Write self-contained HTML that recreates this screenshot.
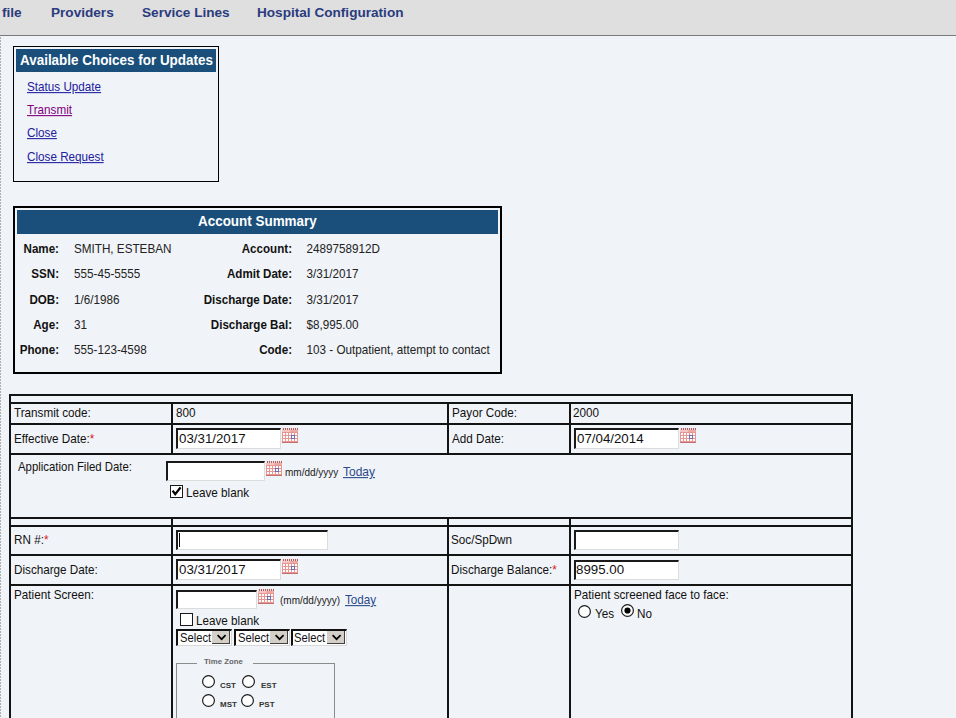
<!DOCTYPE html>
<html><head><meta charset="utf-8"><title>Account</title>
<style>
html,body{margin:0;padding:0;}
body{width:956px;height:718px;overflow:hidden;background:#f0f3f7;position:relative;font-family:'Liberation Sans', sans-serif;}
.a{position:absolute;}
.t{position:absolute;line-height:20px;white-space:pre;font-family:'Liberation Sans', sans-serif;}
.inp{background:#fff;border-style:solid;border-width:2px 1px 1px 2px;border-color:#1a1a1a #dcdcdc #dcdcdc #1a1a1a;box-sizing:border-box;}
.sel{width:56px;height:17px;background:#fff;border-style:solid;border-width:2px 1px 1px 2px;border-color:#111 #d8d8d8 #d8d8d8 #111;box-sizing:border-box;}
.sel .btn{position:absolute;right:1px;top:0;width:18px;height:13px;background:#d4d0c8;border-right:1px solid #404040;border-bottom:1px solid #404040;box-sizing:border-box;}
.sel .btn svg{position:absolute;left:0;top:0;}
</style></head><body>
<div class="a" style="left:0px;top:0px;width:956px;height:35px;background:#dfdfdf;"></div>
<div class="a" style="left:0px;top:35px;width:956px;height:1px;background:#7a7a7a;"></div>
<div class="a" style="left:0;top:37px;width:1px;height:681px;background:repeating-linear-gradient(to bottom,#aeb1ae 0,#aeb1ae 2px,transparent 2px,transparent 3px)"></div>
<div class="a" style="left:13px;top:46px;width:206px;height:136px;border:1px solid #000;box-sizing:border-box;"></div>
<div class="a" style="left:16px;top:49px;width:200px;height:23px;background:#1a4f7b;"></div>
<div class="a" style="left:13px;top:206px;width:489px;height:168px;border:2px solid #000;box-sizing:border-box;"></div>
<div class="a" style="left:17px;top:210px;width:481px;height:24px;background:#1a4f7b;"></div>
<div class="a" style="left:9px;top:394px;width:844px;height:2px;background:#141414;"></div>
<div class="a" style="left:9px;top:402px;width:844px;height:2px;background:#141414;"></div>
<div class="a" style="left:9px;top:423px;width:844px;height:2px;background:#141414;"></div>
<div class="a" style="left:9px;top:453px;width:844px;height:2px;background:#141414;"></div>
<div class="a" style="left:9px;top:517px;width:844px;height:2px;background:#141414;"></div>
<div class="a" style="left:9px;top:525px;width:844px;height:2px;background:#141414;"></div>
<div class="a" style="left:9px;top:554px;width:844px;height:2px;background:#141414;"></div>
<div class="a" style="left:9px;top:584px;width:844px;height:2px;background:#141414;"></div>
<div class="a" style="left:9px;top:394px;width:2px;height:325px;background:#141414;"></div>
<div class="a" style="left:851px;top:394px;width:2px;height:325px;background:#141414;"></div>
<div class="a" style="left:171px;top:402px;width:2px;height:52px;background:#141414;"></div>
<div class="a" style="left:447px;top:402px;width:2px;height:52px;background:#141414;"></div>
<div class="a" style="left:569px;top:402px;width:2px;height:52px;background:#141414;"></div>
<div class="a" style="left:171px;top:517px;width:2px;height:202px;background:#141414;"></div>
<div class="a" style="left:447px;top:517px;width:2px;height:202px;background:#141414;"></div>
<div class="a" style="left:569px;top:517px;width:2px;height:202px;background:#141414;"></div>
<div class="a inp" style="left:176px;top:428px;width:105px;height:21px"></div>
<svg class="a" style="left:282px;top:428px" width="16" height="15" viewBox="0 0 16 15" shape-rendering="crispEdges"><rect x="0" y="2" width="16" height="12" fill="#e99592"/><rect x="0" y="2" width="8" height="2" fill="#f5c4c0"/><rect x="8" y="2" width="8" height="2" fill="#eda8a4"/><rect x="0" y="0" width="16" height="2" fill="#f4dada"/><g fill="#a86464"><rect x="1" y="0" width="1" height="2"/><rect x="3" y="0" width="1" height="2"/><rect x="5" y="0" width="1" height="2"/><rect x="7" y="0" width="1" height="2"/><rect x="9" y="0" width="1" height="2"/><rect x="11" y="0" width="1" height="2"/><rect x="13" y="0" width="1" height="2"/><rect x="15" y="0" width="1" height="2"/></g><g fill="#fff"><rect x="1" y="5" width="2" height="2"/><rect x="4" y="5" width="2" height="2"/><rect x="7" y="5" width="2" height="2"/><rect x="10" y="5" width="2" height="2"/><rect x="13" y="5" width="2" height="2"/><rect x="1" y="8" width="2" height="2"/><rect x="4" y="8" width="2" height="2"/><rect x="7" y="8" width="2" height="2"/><rect x="10" y="8" width="2" height="2"/><rect x="13" y="8" width="2" height="2"/><rect x="1" y="11" width="2" height="2"/><rect x="4" y="11" width="2" height="2"/><rect x="7" y="11" width="2" height="2"/><rect x="10" y="11" width="2" height="2"/><rect x="13" y="11" width="2" height="2"/></g><rect x="9" y="7" width="4" height="4" fill="#6870b4"/><rect x="10" y="8" width="2" height="2" fill="#fff"/><rect x="0" y="14" width="16" height="1" fill="#c47070"/></svg>
<div class="a inp" style="left:574px;top:428px;width:105px;height:21px"></div>
<svg class="a" style="left:680px;top:428px" width="16" height="15" viewBox="0 0 16 15" shape-rendering="crispEdges"><rect x="0" y="2" width="16" height="12" fill="#e99592"/><rect x="0" y="2" width="8" height="2" fill="#f5c4c0"/><rect x="8" y="2" width="8" height="2" fill="#eda8a4"/><rect x="0" y="0" width="16" height="2" fill="#f4dada"/><g fill="#a86464"><rect x="1" y="0" width="1" height="2"/><rect x="3" y="0" width="1" height="2"/><rect x="5" y="0" width="1" height="2"/><rect x="7" y="0" width="1" height="2"/><rect x="9" y="0" width="1" height="2"/><rect x="11" y="0" width="1" height="2"/><rect x="13" y="0" width="1" height="2"/><rect x="15" y="0" width="1" height="2"/></g><g fill="#fff"><rect x="1" y="5" width="2" height="2"/><rect x="4" y="5" width="2" height="2"/><rect x="7" y="5" width="2" height="2"/><rect x="10" y="5" width="2" height="2"/><rect x="13" y="5" width="2" height="2"/><rect x="1" y="8" width="2" height="2"/><rect x="4" y="8" width="2" height="2"/><rect x="7" y="8" width="2" height="2"/><rect x="10" y="8" width="2" height="2"/><rect x="13" y="8" width="2" height="2"/><rect x="1" y="11" width="2" height="2"/><rect x="4" y="11" width="2" height="2"/><rect x="7" y="11" width="2" height="2"/><rect x="10" y="11" width="2" height="2"/><rect x="13" y="11" width="2" height="2"/></g><rect x="9" y="7" width="4" height="4" fill="#6870b4"/><rect x="10" y="8" width="2" height="2" fill="#fff"/><rect x="0" y="14" width="16" height="1" fill="#c47070"/></svg>
<div class="a inp" style="left:166px;top:461px;width:99px;height:20px"></div>
<svg class="a" style="left:266px;top:461px" width="16" height="15" viewBox="0 0 16 15" shape-rendering="crispEdges"><rect x="0" y="2" width="16" height="12" fill="#e99592"/><rect x="0" y="2" width="8" height="2" fill="#f5c4c0"/><rect x="8" y="2" width="8" height="2" fill="#eda8a4"/><rect x="0" y="0" width="16" height="2" fill="#f4dada"/><g fill="#a86464"><rect x="1" y="0" width="1" height="2"/><rect x="3" y="0" width="1" height="2"/><rect x="5" y="0" width="1" height="2"/><rect x="7" y="0" width="1" height="2"/><rect x="9" y="0" width="1" height="2"/><rect x="11" y="0" width="1" height="2"/><rect x="13" y="0" width="1" height="2"/><rect x="15" y="0" width="1" height="2"/></g><g fill="#fff"><rect x="1" y="5" width="2" height="2"/><rect x="4" y="5" width="2" height="2"/><rect x="7" y="5" width="2" height="2"/><rect x="10" y="5" width="2" height="2"/><rect x="13" y="5" width="2" height="2"/><rect x="1" y="8" width="2" height="2"/><rect x="4" y="8" width="2" height="2"/><rect x="7" y="8" width="2" height="2"/><rect x="10" y="8" width="2" height="2"/><rect x="13" y="8" width="2" height="2"/><rect x="1" y="11" width="2" height="2"/><rect x="4" y="11" width="2" height="2"/><rect x="7" y="11" width="2" height="2"/><rect x="10" y="11" width="2" height="2"/><rect x="13" y="11" width="2" height="2"/></g><rect x="9" y="7" width="4" height="4" fill="#6870b4"/><rect x="10" y="8" width="2" height="2" fill="#fff"/><rect x="0" y="14" width="16" height="1" fill="#c47070"/></svg>
<svg class="a" style="left:170px;top:485px" width="13" height="13" viewBox="0 0 13 13"><rect x="0.5" y="0.5" width="12" height="12" fill="#fff" stroke="#1a1a1a"/><path d="M2.6 5.6 L5.2 9.2 L10.6 2.4" fill="none" stroke="#000" stroke-width="2.3"/></svg>
<div class="a inp" style="left:176px;top:530px;width:152px;height:20px"></div>
<div class="a" style="left:179px;top:533px;width:1px;height:14px;background:#000;"></div>
<div class="a inp" style="left:574px;top:530px;width:105px;height:20px"></div>
<div class="a inp" style="left:176px;top:559px;width:105px;height:21px"></div>
<svg class="a" style="left:282px;top:559px" width="16" height="15" viewBox="0 0 16 15" shape-rendering="crispEdges"><rect x="0" y="2" width="16" height="12" fill="#e99592"/><rect x="0" y="2" width="8" height="2" fill="#f5c4c0"/><rect x="8" y="2" width="8" height="2" fill="#eda8a4"/><rect x="0" y="0" width="16" height="2" fill="#f4dada"/><g fill="#a86464"><rect x="1" y="0" width="1" height="2"/><rect x="3" y="0" width="1" height="2"/><rect x="5" y="0" width="1" height="2"/><rect x="7" y="0" width="1" height="2"/><rect x="9" y="0" width="1" height="2"/><rect x="11" y="0" width="1" height="2"/><rect x="13" y="0" width="1" height="2"/><rect x="15" y="0" width="1" height="2"/></g><g fill="#fff"><rect x="1" y="5" width="2" height="2"/><rect x="4" y="5" width="2" height="2"/><rect x="7" y="5" width="2" height="2"/><rect x="10" y="5" width="2" height="2"/><rect x="13" y="5" width="2" height="2"/><rect x="1" y="8" width="2" height="2"/><rect x="4" y="8" width="2" height="2"/><rect x="7" y="8" width="2" height="2"/><rect x="10" y="8" width="2" height="2"/><rect x="13" y="8" width="2" height="2"/><rect x="1" y="11" width="2" height="2"/><rect x="4" y="11" width="2" height="2"/><rect x="7" y="11" width="2" height="2"/><rect x="10" y="11" width="2" height="2"/><rect x="13" y="11" width="2" height="2"/></g><rect x="9" y="7" width="4" height="4" fill="#6870b4"/><rect x="10" y="8" width="2" height="2" fill="#fff"/><rect x="0" y="14" width="16" height="1" fill="#c47070"/></svg>
<div class="a inp" style="left:574px;top:560px;width:105px;height:20px"></div>
<div class="a inp" style="left:176px;top:590px;width:81px;height:19px"></div>
<svg class="a" style="left:258px;top:589px" width="16" height="15" viewBox="0 0 16 15" shape-rendering="crispEdges"><rect x="0" y="2" width="16" height="12" fill="#e99592"/><rect x="0" y="2" width="8" height="2" fill="#f5c4c0"/><rect x="8" y="2" width="8" height="2" fill="#eda8a4"/><rect x="0" y="0" width="16" height="2" fill="#f4dada"/><g fill="#a86464"><rect x="1" y="0" width="1" height="2"/><rect x="3" y="0" width="1" height="2"/><rect x="5" y="0" width="1" height="2"/><rect x="7" y="0" width="1" height="2"/><rect x="9" y="0" width="1" height="2"/><rect x="11" y="0" width="1" height="2"/><rect x="13" y="0" width="1" height="2"/><rect x="15" y="0" width="1" height="2"/></g><g fill="#fff"><rect x="1" y="5" width="2" height="2"/><rect x="4" y="5" width="2" height="2"/><rect x="7" y="5" width="2" height="2"/><rect x="10" y="5" width="2" height="2"/><rect x="13" y="5" width="2" height="2"/><rect x="1" y="8" width="2" height="2"/><rect x="4" y="8" width="2" height="2"/><rect x="7" y="8" width="2" height="2"/><rect x="10" y="8" width="2" height="2"/><rect x="13" y="8" width="2" height="2"/><rect x="1" y="11" width="2" height="2"/><rect x="4" y="11" width="2" height="2"/><rect x="7" y="11" width="2" height="2"/><rect x="10" y="11" width="2" height="2"/><rect x="13" y="11" width="2" height="2"/></g><rect x="9" y="7" width="4" height="4" fill="#6870b4"/><rect x="10" y="8" width="2" height="2" fill="#fff"/><rect x="0" y="14" width="16" height="1" fill="#c47070"/></svg>
<svg class="a" style="left:180px;top:613px" width="13" height="13" viewBox="0 0 13 13"><rect x="0.5" y="0.5" width="12" height="12" fill="#fff" stroke="#1a1a1a"/></svg>
<div class="a sel" style="left:176px;top:629px"><div class="btn"><svg width="17" height="13" viewBox="0 0 17 13"><path d="M5.6 4.2 L9.6 8.2 L13.6 4.2" fill="none" stroke="#000" stroke-width="1.7"/></svg></div></div>
<div class="a sel" style="left:234px;top:629px"><div class="btn"><svg width="17" height="13" viewBox="0 0 17 13"><path d="M5.6 4.2 L9.6 8.2 L13.6 4.2" fill="none" stroke="#000" stroke-width="1.7"/></svg></div></div>
<div class="a sel" style="left:291px;top:629px"><div class="btn"><svg width="17" height="13" viewBox="0 0 17 13"><path d="M5.6 4.2 L9.6 8.2 L13.6 4.2" fill="none" stroke="#000" stroke-width="1.7"/></svg></div></div>
<div class="a" style="left:176px;top:663px;width:159px;height:80px;border:1px solid #8c8c8c;box-sizing:border-box"></div>
<div class="a" style="left:197px;top:660px;width:56px;height:6px;background:#f0f3f7;"></div>
<svg class="a" style="left:202px;top:675px" width="13" height="13" viewBox="0 0 13 13"><circle cx="6.5" cy="6.5" r="5.9" fill="#fff" stroke="#1c1c1c" stroke-width="1.2"/></svg>
<svg class="a" style="left:242px;top:675px" width="13" height="13" viewBox="0 0 13 13"><circle cx="6.5" cy="6.5" r="5.9" fill="#fff" stroke="#1c1c1c" stroke-width="1.2"/></svg>
<svg class="a" style="left:202px;top:694px" width="13" height="13" viewBox="0 0 13 13"><circle cx="6.5" cy="6.5" r="5.9" fill="#fff" stroke="#1c1c1c" stroke-width="1.2"/></svg>
<svg class="a" style="left:241px;top:694px" width="13" height="13" viewBox="0 0 13 13"><circle cx="6.5" cy="6.5" r="5.9" fill="#fff" stroke="#1c1c1c" stroke-width="1.2"/></svg>
<svg class="a" style="left:578px;top:605px" width="13" height="13" viewBox="0 0 13 13"><circle cx="6.5" cy="6.5" r="5.9" fill="#fff" stroke="#1c1c1c" stroke-width="1.2"/></svg>
<svg class="a" style="left:621px;top:604px" width="13" height="13" viewBox="0 0 13 13"><circle cx="6.5" cy="6.5" r="5.9" fill="#fff" stroke="#1c1c1c" stroke-width="1.2"/><circle cx="6.5" cy="6.5" r="3.1" fill="#000"/></svg>
<div class="t" style="top:3px;font-weight:700;font-size:13.6px;color:#2a3b7e;left:2px;">file</div>
<div class="t" style="top:3px;font-weight:700;font-size:13.6px;color:#2a3b7e;left:51px;">Providers</div>
<div class="t" style="top:3px;font-weight:700;font-size:13.6px;color:#2a3b7e;left:142px;">Service Lines</div>
<div class="t" style="top:3px;font-weight:700;font-size:13.6px;color:#2a3b7e;left:257px;">Hospital Configuration</div>
<div class="t" style="top:51px;font-weight:700;font-size:13.45px;color:#fff;left:20px;transform:scaleY(1.08);transform-origin:0 14px;">Available Choices for Updates</div>
<div class="t" style="top:77px;font-weight:400;font-size:11.7px;color:#2020a0;left:27px;text-decoration:underline;transform:scaleY(1.08);transform-origin:0 14px;">Status Update</div>
<div class="t" style="top:100px;font-weight:400;font-size:11.7px;color:#800080;left:27px;text-decoration:underline;transform:scaleY(1.08);transform-origin:0 14px;">Transmit</div>
<div class="t" style="top:123px;font-weight:400;font-size:11.7px;color:#2020a0;left:27px;text-decoration:underline;transform:scaleY(1.08);transform-origin:0 14px;">Close</div>
<div class="t" style="top:147px;font-weight:400;font-size:11.7px;color:#2020a0;left:27px;text-decoration:underline;transform:scaleY(1.08);transform-origin:0 14px;">Close Request</div>
<div class="t" style="top:212px;font-weight:700;font-size:13.45px;color:#fff;left:198px;transform:scaleY(1.08);transform-origin:0 14px;">Account Summary</div>
<div class="t" style="top:239px;font-weight:700;font-size:11.6px;color:#111;right:897px;transform:scaleY(1.08);transform-origin:0 14px;">Name:</div>
<div class="t" style="top:239px;font-weight:400;font-size:11.7px;color:#222;left:74px;transform:scaleY(1.08);transform-origin:0 14px;">SMITH, ESTEBAN</div>
<div class="t" style="top:239px;font-weight:700;font-size:11.6px;color:#111;right:664px;transform:scaleY(1.08);transform-origin:0 14px;">Account:</div>
<div class="t" style="top:239px;font-weight:400;font-size:11.7px;color:#222;left:306.5px;transform:scaleY(1.08);transform-origin:0 14px;">2489758912D</div>
<div class="t" style="top:264px;font-weight:700;font-size:11.6px;color:#111;right:897px;transform:scaleY(1.08);transform-origin:0 14px;">SSN:</div>
<div class="t" style="top:264px;font-weight:400;font-size:11.7px;color:#222;left:74px;transform:scaleY(1.08);transform-origin:0 14px;">555-45-5555</div>
<div class="t" style="top:264px;font-weight:700;font-size:11.6px;color:#111;right:664px;transform:scaleY(1.08);transform-origin:0 14px;">Admit Date:</div>
<div class="t" style="top:264px;font-weight:400;font-size:11.7px;color:#222;left:306.5px;transform:scaleY(1.08);transform-origin:0 14px;">3/31/2017</div>
<div class="t" style="top:290px;font-weight:700;font-size:11.6px;color:#111;right:897px;transform:scaleY(1.08);transform-origin:0 14px;">DOB:</div>
<div class="t" style="top:290px;font-weight:400;font-size:11.7px;color:#222;left:74px;transform:scaleY(1.08);transform-origin:0 14px;">1/6/1986</div>
<div class="t" style="top:290px;font-weight:700;font-size:11.6px;color:#111;right:664px;transform:scaleY(1.08);transform-origin:0 14px;">Discharge Date:</div>
<div class="t" style="top:290px;font-weight:400;font-size:11.7px;color:#222;left:306.5px;transform:scaleY(1.08);transform-origin:0 14px;">3/31/2017</div>
<div class="t" style="top:315px;font-weight:700;font-size:11.6px;color:#111;right:897px;transform:scaleY(1.08);transform-origin:0 14px;">Age:</div>
<div class="t" style="top:315px;font-weight:400;font-size:11.7px;color:#222;left:74px;transform:scaleY(1.08);transform-origin:0 14px;">31</div>
<div class="t" style="top:315px;font-weight:700;font-size:11.6px;color:#111;right:664px;transform:scaleY(1.08);transform-origin:0 14px;">Discharge Bal:</div>
<div class="t" style="top:315px;font-weight:400;font-size:11.7px;color:#222;left:306.5px;transform:scaleY(1.08);transform-origin:0 14px;">$8,995.00</div>
<div class="t" style="top:340px;font-weight:700;font-size:11.6px;color:#111;right:897px;transform:scaleY(1.08);transform-origin:0 14px;">Phone:</div>
<div class="t" style="top:340px;font-weight:400;font-size:11.7px;color:#222;left:74px;transform:scaleY(1.08);transform-origin:0 14px;">555-123-4598</div>
<div class="t" style="top:340px;font-weight:700;font-size:11.6px;color:#111;right:664px;transform:scaleY(1.08);transform-origin:0 14px;">Code:</div>
<div class="t" style="top:340px;font-weight:400;font-size:11.7px;color:#222;left:306.5px;transform:scaleY(1.08);transform-origin:0 14px;">103 - Outpatient, attempt to contact</div>
<div class="t" style="top:403px;font-weight:400;font-size:11.7px;color:#111;left:14px;transform:scaleY(1.08);transform-origin:0 14px;">Transmit code:</div>
<div class="t" style="top:403px;font-weight:400;font-size:11.7px;color:#111;left:176px;transform:scaleY(1.08);transform-origin:0 14px;">800</div>
<div class="t" style="top:403px;font-weight:400;font-size:11.7px;color:#111;left:452px;transform:scaleY(1.08);transform-origin:0 14px;">Payor Code:</div>
<div class="t" style="top:403px;font-weight:400;font-size:11.7px;color:#111;left:573px;transform:scaleY(1.08);transform-origin:0 14px;">2000</div>
<div class="t" style="top:429px;font-weight:400;font-size:11.7px;color:#111;left:14px;transform:scaleY(1.08);transform-origin:0 14px;">Effective Date:<span style="color:#d42020">*</span></div>
<div class="t" style="top:429px;font-weight:400;font-size:11.7px;color:#111;left:452px;transform:scaleY(1.08);transform-origin:0 14px;">Add Date:</div>
<div class="t" style="top:429px;font-weight:400;font-size:13.3px;color:#111;left:179px;">03/31/2017</div>
<div class="t" style="top:429px;font-weight:400;font-size:13.3px;color:#111;left:577px;">07/04/2014</div>
<div class="t" style="top:457px;font-weight:400;font-size:11.4px;color:#111;left:18px;transform:scaleY(1.08);transform-origin:0 14px;">Application Filed Date:</div>
<div class="t" style="top:463px;font-weight:400;font-size:10px;color:#222;left:285px;">mm/dd/yyyy</div>
<div class="t" style="top:462px;font-weight:400;font-size:12px;color:#2a4a8a;left:343px;text-decoration:underline;transform:scaleY(1.08);transform-origin:0 14px;">Today</div>
<div class="t" style="top:483px;font-weight:400;font-size:11.7px;color:#111;left:186px;transform:scaleY(1.08);transform-origin:0 14px;">Leave blank</div>
<div class="t" style="top:530px;font-weight:400;font-size:11.7px;color:#111;left:14px;transform:scaleY(1.08);transform-origin:0 14px;">RN #:<span style="color:#d42020">*</span></div>
<div class="t" style="top:530px;font-weight:400;font-size:11.7px;color:#111;left:451px;transform:scaleY(1.08);transform-origin:0 14px;">Soc/SpDwn</div>
<div class="t" style="top:560px;font-weight:400;font-size:11.7px;color:#111;left:14px;transform:scaleY(1.08);transform-origin:0 14px;">Discharge Date:</div>
<div class="t" style="top:560px;font-weight:400;font-size:13.3px;color:#111;left:179px;">03/31/2017</div>
<div class="t" style="top:560px;font-weight:400;font-size:11.7px;color:#111;left:451px;transform:scaleY(1.08);transform-origin:0 14px;">Discharge Balance:<span style="color:#d42020">*</span></div>
<div class="t" style="top:560px;font-weight:400;font-size:13.3px;color:#111;left:576px;">8995.00</div>
<div class="t" style="top:585px;font-weight:400;font-size:11.7px;color:#111;left:14px;transform:scaleY(1.08);transform-origin:0 14px;">Patient Screen:</div>
<div class="t" style="top:591px;font-weight:400;font-size:10px;color:#222;left:280px;">(mm/dd/yyyy)</div>
<div class="t" style="top:590px;font-weight:400;font-size:11.7px;color:#2a4a8a;left:345px;text-decoration:underline;transform:scaleY(1.08);transform-origin:0 14px;">Today</div>
<div class="t" style="top:611px;font-weight:400;font-size:11.7px;color:#111;left:196px;transform:scaleY(1.08);transform-origin:0 14px;">Leave blank</div>
<div class="t" style="top:628px;font-weight:400;font-size:11.2px;color:#111;left:180px;transform:scaleY(1.08);transform-origin:0 14px;">Select</div>
<div class="t" style="top:628px;font-weight:400;font-size:11.2px;color:#111;left:238px;transform:scaleY(1.08);transform-origin:0 14px;">Select</div>
<div class="t" style="top:628px;font-weight:400;font-size:11.2px;color:#111;left:294px;transform:scaleY(1.08);transform-origin:0 14px;">Select</div>
<div class="t" style="top:652px;font-weight:700;font-size:7.8px;color:#666;left:204px;">Time Zone</div>
<div class="t" style="top:676px;font-weight:700;font-size:8px;color:#333;left:220px;">CST</div>
<div class="t" style="top:676px;font-weight:700;font-size:8px;color:#333;left:261px;">EST</div>
<div class="t" style="top:695px;font-weight:700;font-size:8px;color:#333;left:220px;">MST</div>
<div class="t" style="top:695px;font-weight:700;font-size:8px;color:#333;left:259px;">PST</div>
<div class="t" style="top:585px;font-weight:400;font-size:11.7px;color:#111;left:574px;transform:scaleY(1.08);transform-origin:0 14px;">Patient screened face to face:</div>
<div class="t" style="top:604px;font-weight:400;font-size:11.7px;color:#111;left:595px;transform:scaleY(1.08);transform-origin:0 14px;">Yes</div>
<div class="t" style="top:604px;font-weight:400;font-size:11.7px;color:#111;left:637px;transform:scaleY(1.08);transform-origin:0 14px;">No</div>
</body></html>
